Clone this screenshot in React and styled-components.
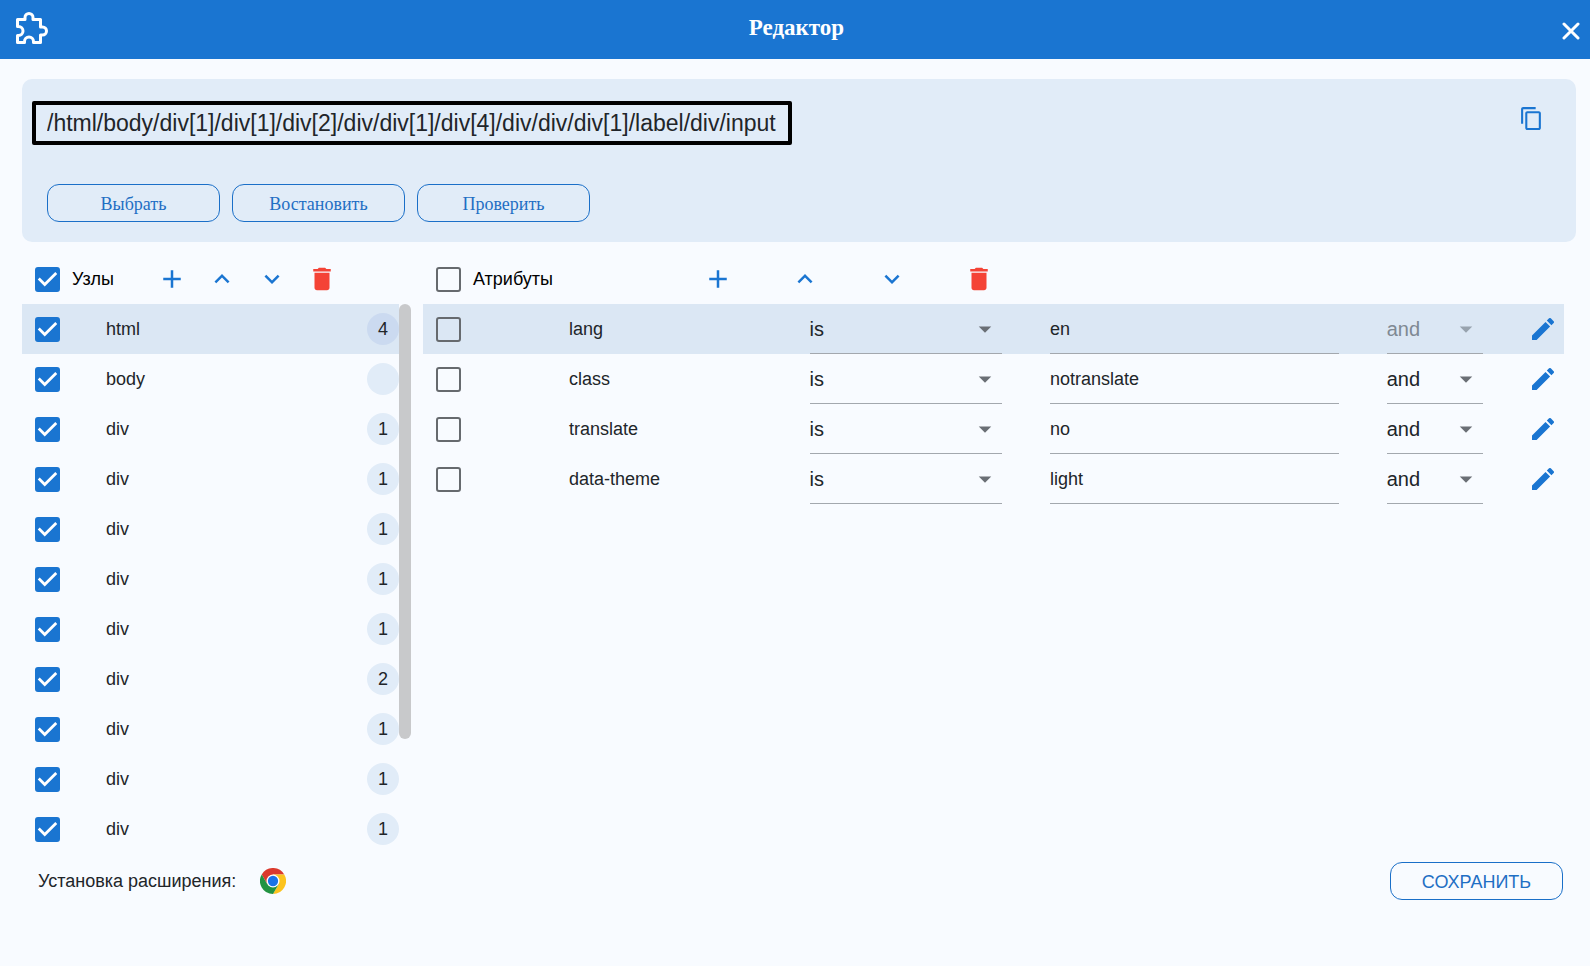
import React, { useState } from 'react'
import styled, { createGlobalStyle } from 'styled-components'
import {
  MdAdd,
  MdArrowDropDown,
  MdContentCopy,
  MdDelete,
  MdExpandLess,
  MdExpandMore,
} from 'react-icons/md'

const XPATH = '/html/body/div[1]/div[1]/div[2]/div/div[1]/div[4]/div/div/div[1]/label/div/input'

const NODES = [
  { tag: 'html', count: '4' },
  { tag: 'body', count: '' },
  { tag: 'div', count: '1' },
  { tag: 'div', count: '1' },
  { tag: 'div', count: '1' },
  { tag: 'div', count: '1' },
  { tag: 'div', count: '1' },
  { tag: 'div', count: '2' },
  { tag: 'div', count: '1' },
  { tag: 'div', count: '1' },
  { tag: 'div', count: '1' },
]

const ATTRIBUTES = [
  { name: 'lang', value: 'en' },
  { name: 'class', value: 'notranslate' },
  { name: 'translate', value: 'no' },
  { name: 'data-theme', value: 'light' },
]

function Checkbox({ id, defaultChecked }) {
  const [checked, setChecked] = useState(Boolean(defaultChecked))

  return (
    <CheckboxBox>
      <CheckboxInput
        id={id}
        type="checkbox"
        checked={checked}
        onChange={(e) => setChecked(e.target.checked)}
      />
      {checked && (
        <CheckMark viewBox="3 3 18 18" aria-hidden="true">
          <path d="M10 17l-5-5 1.41-1.41L10 14.17l7.59-7.59L19 8z" fill="#fff" />
        </CheckMark>
      )}
    </CheckboxBox>
  )
}

function SelectField({ label, options, disabled }) {
  return (
    <SelectBox $disabled={disabled}>
      <Select aria-label={label} disabled={disabled} defaultValue={options[0]}>
        {options.map((option) => (
          <option key={option}>{option}</option>
        ))}
      </Select>
      <SelectArrow size={30} aria-hidden="true" />
    </SelectBox>
  )
}

function Tools() {
  return (
    <ToolBar>
      <IconButton aria-label="Добавить"><MdAdd size={30} /></IconButton>
      <IconButton aria-label="Выше"><MdExpandLess size={30} /></IconButton>
      <IconButton aria-label="Ниже"><MdExpandMore size={30} /></IconButton>
      <IconButton $color="#f44336" aria-label="Удалить"><MdDelete size={30} /></IconButton>
    </ToolBar>
  )
}

function PuzzleIcon() {
  return (
    <svg width="32" height="32" viewBox="0 0 32 32" fill="none" stroke="currentColor" strokeWidth="3" strokeLinejoin="round" aria-hidden="true">
      <path d="M1.5 7.5H9v-2a4 4 0 0 1 8 0v2h7.5V15h2a4 4 0 0 1 0 8h-2v7.5h-7v-1a4.5 4.5 0 0 0-9 0v1h-7v-7h1a4.5 4.5 0 0 0 0-9h-1z" />
    </svg>
  )
}

function CloseIcon() {
  return (
    <svg width="18" height="18" viewBox="0 0 18 18" fill="none" stroke="currentColor" strokeWidth="3" strokeLinecap="round" aria-hidden="true">
      <path d="M2 2l14 14M16 2L2 16" />
    </svg>
  )
}

function PencilIcon() {
  return (
    <svg width="22" height="22" viewBox="3 3 18 18" fill="currentColor" aria-hidden="true">
      <path d="M3 17.25V21h3.75L17.81 9.94l-3.75-3.75L3 17.25zM20.71 7.04a.996.996 0 0 0 0-1.41l-2.34-2.34a.996.996 0 0 0-1.41 0l-1.83 1.83 3.75 3.75 1.83-1.83z" />
    </svg>
  )
}

function ChromeLogo() {
  return (
    <svg width="26" height="26" viewBox="0 0 48 48" aria-hidden="true">
      <path d="M24 12h20.8A24 24 0 0 0 3.2 12l10.4 18z" fill="#db3a2e" />
      <path d="M34.4 30 24 48A24 24 0 0 0 44.8 12H24z" fill="#fcc31e" />
      <path d="M13.6 30 3.2 12A24 24 0 0 0 24 48l10.4-18z" fill="#229342" />
      <circle cx="24" cy="24" r="12" fill="#fff" />
      <circle cx="24" cy="24" r="9.5" fill="#1a73e8" />
    </svg>
  )
}

export default function App() {
  return (
    <Page>
      <GlobalStyle />
      <Header>
        <PuzzleIcon />
        <Title>Редактор</Title>
        <CloseButton $color="#fff" aria-label="Закрыть"><CloseIcon /></CloseButton>
      </Header>

      <PathPanel>
        <PathRow>
          <PathInput aria-label="XPath" defaultValue={XPATH} />
          <CopyButton aria-label="Копировать"><MdContentCopy size={25} /></CopyButton>
        </PathRow>
        <PathActions>
          <PathButton>Выбрать</PathButton>
          <PathButton>Востановить</PathButton>
          <PathButton>Проверить</PathButton>
        </PathActions>
      </PathPanel>

      <Editor>
        <section>
          <NodesHeader>
            <HeaderLabel>
              <Checkbox id="all-nodes" defaultChecked />
              <label htmlFor="all-nodes">Узлы</label>
            </HeaderLabel>
            <Tools />
          </NodesHeader>
          <NodesBody>
            <List>
              {NODES.map((node, i) => (
                <NodeRow key={i} $selected={i === 0}>
                  <Checkbox id={`node-${i}`} defaultChecked />
                  <label htmlFor={`node-${i}`}>{node.tag}</label>
                  <Count $selected={i === 0}>{node.count}</Count>
                </NodeRow>
              ))}
            </List>
            <ScrollThumb />
          </NodesBody>
        </section>

        <section>
          <AttributesHeader>
            <HeaderLabel>
              <Checkbox id="all-attributes" />
              <label htmlFor="all-attributes">Атрибуты</label>
            </HeaderLabel>
            <Tools />
          </AttributesHeader>
          <List>
            {ATTRIBUTES.map((attribute, i) => (
              <AttributeRow key={attribute.name} $selected={i === 0}>
                <Checkbox id={`attribute-${i}`} />
                <label htmlFor={`attribute-${i}`}>{attribute.name}</label>
                <SelectField label="Условие" options={['is', 'contains']} />
                <ValueInput aria-label={attribute.name} defaultValue={attribute.value} />
                <SelectField label="Связка" options={['and', 'or']} disabled={i === 0} />
                <IconButton aria-label="Изменить"><PencilIcon /></IconButton>
              </AttributeRow>
            ))}
          </List>
        </section>
      </Editor>

      <Footer>
        <span>Установка расширения:</span>
        <ChromeLink href="#chrome" aria-label="Chrome"><ChromeLogo /></ChromeLink>
        <SaveButton>Сохранить</SaveButton>
      </Footer>
    </Page>
  )
}

const GlobalStyle = createGlobalStyle`
  * {
    box-sizing: border-box;
  }

  body {
    margin: 0;
    background-color: #f8fbff;
    color: #212529;
    font-family: "Liberation Sans", Arial, sans-serif;
    font-size: 18px;
  }
`

const Page = styled.main`
  min-height: 100vh;
`

const Header = styled.header`
  display: grid;
  grid-template-columns: 40px 1fr 53px;
  align-items: center;
  height: 59px;
  padding: 0 0 3px 16px;
  background-color: #1a75d1;
  color: #fff;
`

const Title = styled.h1`
  margin: 0;
  text-align: center;
  font-family: "Liberation Serif", "Times New Roman", serif;
  font-size: 23px;
  font-weight: bold;
`

const IconButton = styled.button`
  display: flex;
  align-items: center;
  justify-content: center;
  padding: 0;
  border: none;
  background: none;
  color: ${({ $color }) => $color || '#1a75d1'};
  cursor: pointer;
`

const CloseButton = styled(IconButton)`
  justify-self: end;
  padding: 6px 10px 0;
`

const CopyButton = styled(IconButton)`
  padding-top: 5px;
`

const PathPanel = styled.section`
  margin: 20px 14px 12px 22px;
  padding: 22px 32px 20px 10px;
  border-radius: 10px;
  background-color: #e1ecf8;
`

const PathRow = styled.div`
  display: flex;
  align-items: flex-start;
  justify-content: space-between;
`

const PathInput = styled.input`
  width: 760px;
  max-width: 90%;
  height: 44px;
  padding: 0 10px 0 11px;
  border: 4px solid #000;
  border-radius: 2px;
  background: none;
  color: #212529;
  font-family: inherit;
  font-size: 23px;
`

const PathActions = styled.div`
  display: flex;
  gap: 12px;
  margin: 39px 0 0 15px;
`

const OutlinedButton = styled.button`
  width: 173px;
  height: 38px;
  padding: 2px 0 0;
  border: 1px solid #1a6fc8;
  border-radius: 12px;
  background: none;
  color: #1f6fc4;
  font-size: 18px;
  cursor: pointer;
`

const PathButton = styled(OutlinedButton)`
  font-family: "Liberation Serif", "Times New Roman", serif;
`

const SaveButton = styled(OutlinedButton)`
  margin-left: auto;
  font-family: inherit;
  text-transform: uppercase;
`

const Editor = styled.div`
  display: grid;
  grid-template-columns: 389px 1fr;
  column-gap: 12px;
  padding: 0 26px 0 22px;
`

const ToolBar = styled.div`
  display: grid;
  grid-template-columns: repeat(4, 1fr);
`

const NodesHeader = styled.div`
  display: grid;
  grid-template-columns: 125px 200px;
  align-items: center;
  height: 50px;
`

const AttributesHeader = styled(NodesHeader)`
  grid-template-columns: 22% 30.5%;
`

const HeaderLabel = styled.div`
  display: flex;
  align-items: center;
  gap: 12px;
  padding-left: 13px;
  color: #000;
`

const CheckboxBox = styled.span`
  position: relative;
  display: block;
  width: 25px;
  height: 25px;
`

const CheckboxInput = styled.input`
  appearance: none;
  display: block;
  width: 25px;
  height: 25px;
  margin: 0;
  border: 2px solid #666a6e;
  border-radius: 3px;
  cursor: pointer;

  &:checked {
    border-color: #1a75d1;
    background-color: #1a75d1;
  }
`

const CheckMark = styled.svg`
  position: absolute;
  inset: 0;
  pointer-events: none;
`

const NodesBody = styled.div`
  display: grid;
  grid-template-columns: 1fr 12px;
`

const List = styled.ul`
  margin: 0;
  padding: 0;
  list-style: none;
`

const NodeRow = styled.li`
  display: grid;
  grid-template-columns: 25px 1fr 32px;
  column-gap: 46px;
  align-items: center;
  height: 50px;
  padding-left: 13px;
  background-color: ${({ $selected }) => ($selected ? '#dbe7f4' : 'transparent')};
`

const Count = styled.span`
  display: flex;
  align-items: center;
  justify-content: center;
  width: 32px;
  height: 32px;
  border-radius: 50%;
  background-color: ${({ $selected }) => ($selected ? '#cbdaf0' : '#e1ecf8')};
`

const ScrollThumb = styled.div`
  height: 435px;
  border-radius: 6px;
  background-color: #c8c9cb;
`

const AttributeRow = styled.li`
  display: grid;
  grid-template-columns: 85px 4fr 4fr 6fr 2fr 24px;
  column-gap: 48px;
  align-items: center;
  height: 50px;
  padding: 0 9px 0 13px;
  background-color: ${({ $selected }) => ($selected ? '#dbe7f4' : 'transparent')};
`

const SelectBox = styled.div`
  position: relative;
  height: 50px;
  border-bottom: 1px solid #a3a8ae;
  color: ${({ $disabled }) => ($disabled ? '#98a3ae' : '#6a6f75')};
`

const Select = styled.select`
  appearance: none;
  width: 100%;
  height: 49px;
  padding: 0;
  border: none;
  background: none;
  color: #212529;
  font-family: inherit;
  font-size: 20px;

  &:disabled {
    color: #7f8993;
    opacity: 1;
  }
`

const SelectArrow = styled(MdArrowDropDown)`
  position: absolute;
  top: 10px;
  right: 2px;
  pointer-events: none;
`

const ValueInput = styled.input`
  width: 100%;
  min-width: 0;
  height: 50px;
  padding: 2px 0 0;
  border: none;
  border-bottom: 1px solid #a3a8ae;
  background: none;
  color: #212529;
  font-family: inherit;
  font-size: 18px;
`

const Footer = styled.footer`
  display: flex;
  align-items: center;
  padding: 8px 27px 20px 38px;
`

const ChromeLink = styled.a`
  display: flex;
  margin-left: 24px;
`
